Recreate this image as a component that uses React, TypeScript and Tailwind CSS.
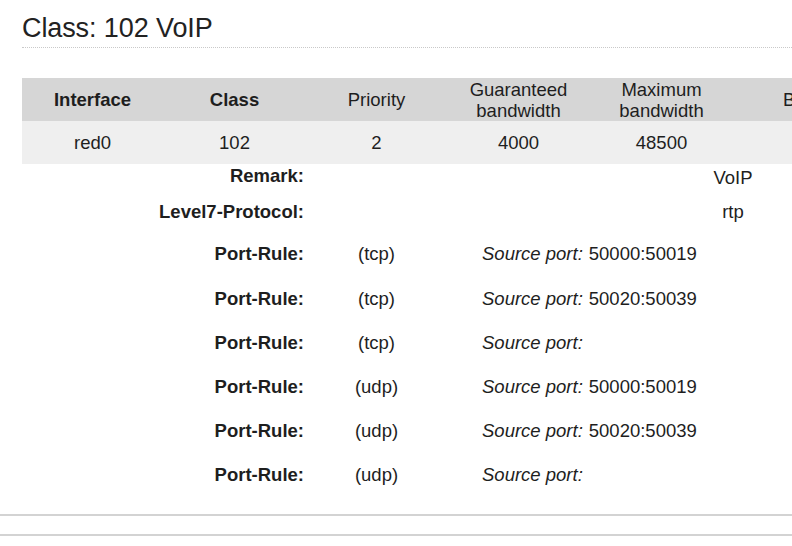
const columns = ["Interface", "Class", "Priority", "Guaranteed bandwidth", "Maximum bandwidth", "Burst"];

const header = [
  { label: "Interface", bold: true },
  { label: "Class", bold: true },
  { label: "Priority", bold: false },
  { label: "Guaranteed\nbandwidth", bold: false },
  { label: "Maximum\nbandwidth", bold: false },
  { label: "Burst", bold: false },
];

const values = ["red0", "102", "2", "4000", "48500", ""];

const portRules = [
  { proto: "tcp", port: "50000:50019" },
  { proto: "tcp", port: "50020:50039" },
  { proto: "tcp", port: "" },
  { proto: "udp", port: "50000:50019" },
  { proto: "udp", port: "50020:50039" },
  { proto: "udp", port: "" },
];

// same column grid for the summary and the detail rows
const grid = "grid w-max grid-cols-[141px_143px_141px_143px_143px_143px] text-[18.5px]";

export default function App() {
  return (
    <div
      className="relative h-[546px] w-[792px] overflow-hidden bg-white text-[#1e1e1e]"
      style={{ fontFamily: '"Liberation Sans", Arial, sans-serif' }}
    >
      <div className="pl-[22px] pt-[12px]">
        <h1 className="border-b border-dotted border-[#c9c9c9] pb-[3px] text-[27px] leading-[32px] tracking-[-0.1px] text-[#222]">
          Class: 102 VoIP
        </h1>
      </div>

      <div className="mt-[30px] pl-[22px]">
        <div className={`${grid} bg-[#d6d6d6]`}>
          {header.map((h, i) => (
            <div
              key={columns[i]}
              className={`flex h-[43px] items-center justify-center whitespace-pre-line text-center leading-[21px] ${h.bold ? "font-bold" : ""}`}
            >
              {h.label}
            </div>
          ))}
        </div>
        <div className={`${grid} bg-[#efefef]`}>
          {values.map((v, i) => (
            <div key={columns[i]} className="flex h-[43px] items-center justify-center">
              {v}
            </div>
          ))}
        </div>

        <div className={grid}>
          <div className="col-span-2 flex h-[24px] items-center justify-end pr-[2px] font-bold">Remark:</div>
          <div className="col-span-2" />
          <div className="col-span-2 flex items-center justify-center">VoIP</div>

          <div className="col-span-2 flex h-[40px] items-center justify-end pr-[2px] font-bold">Level7-Protocol:</div>
          <div className="col-span-2" />
          <div className="col-span-2 flex items-center justify-center">rtp</div>

          {portRules.map((r, i) => (
            <div key={i} className="contents">
              <div className={`col-span-2 flex items-center justify-end pr-[2px] font-bold ${i === 0 ? "h-[45px]" : "h-[44px]"}`}>
                Port-Rule:
              </div>
              <div className="flex items-center justify-center">({r.proto})</div>
              <div className="col-span-3 flex items-center pl-[35px]">
                <span className="italic">Source port:</span>
                <span className="ml-[6px]">{r.port}</span>
              </div>
            </div>
          ))}
        </div>
      </div>

      <div className="mt-[17px] h-[20px] border-t-2 border-[#d3d3d3]" />
      <div className="border-t-2 border-[#d3d3d3]" />
    </div>
  );
}
